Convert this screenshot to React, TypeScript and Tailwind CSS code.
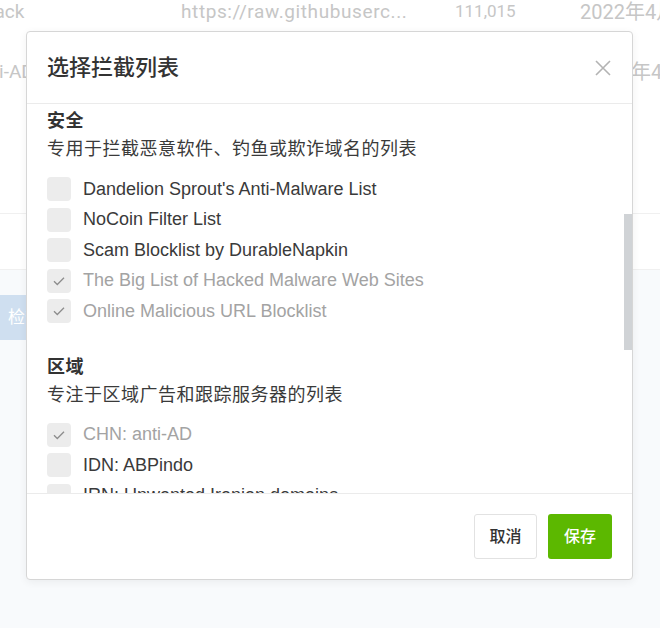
import React from "react";

const security = [
  { name: "Dandelion Sprout's Anti-Malware List", on: false },
  { name: "NoCoin Filter List", on: false },
  { name: "Scam Blocklist by DurableNapkin", on: false },
  { name: "The Big List of Hacked Malware Web Sites", on: true },
  { name: "Online Malicious URL Blocklist", on: true },
];

const regional = [
  { name: "CHN: anti-AD", on: true },
  { name: "IDN: ABPindo", on: false },
  { name: "IRN: Unwanted Iranian domains", on: false },
];

function Row({ name, on }: { name: string; on: boolean }) {
  return (
    <div className="flex h-[30.5px] items-center gap-[12px]">
      <span className="flex h-[24px] w-[24px] shrink-0 items-center justify-center rounded-[4px] bg-[#ececec]">
        {on && (
          <svg width="14" height="14" viewBox="0 0 14 14" fill="none">
            <path d="M2 7.2l3.3 3.3L12 3.8" stroke="#8c8c8c" strokeWidth="1.3" />
          </svg>
        )}
      </span>
      <span className={"whitespace-nowrap text-[18px] " + (on ? "text-[#a3a3a3]" : "text-[#3a3a3a]")}>{name}</span>
    </div>
  );
}

function Section({ title, desc, items }: { title: string; desc: string; items: { name: string; on: boolean }[] }) {
  return (
    <div>
      <div className="text-[18px] leading-[26px] font-bold tracking-[0.5px] text-[#333]">{title}</div>
      <div className="mt-[2px] text-[18px] leading-[26px] tracking-[0.5px] text-[#3a3a3a]">{desc}</div>
      <div className="mt-[12px] flex flex-col">
        {items.map((it) => (
          <Row key={it.name} {...it} />
        ))}
      </div>
    </div>
  );
}

export default function App() {
  return (
    <div className="relative h-[628px] w-[660px] overflow-hidden bg-[#f8fafc] font-['Liberation_Sans','Noto_Sans_CJK_SC',sans-serif]">
      {/* page behind the dialog */}
      <div className="bg-white">
        <div className="-mt-[18px] flex h-[60px] items-center whitespace-nowrap text-[#c6c6c6] font-['Roboto','Noto_Sans_CJK_SC',sans-serif]">
          <span className="-ml-[22px] w-[203px] shrink-0 text-[19px]">Black</span>
          <span className="w-[274px] shrink-0 text-[19px] tracking-[0.6px]">https://raw.githubuserc...</span>
          <span className="w-[125px] shrink-0 text-[17px]">111,015</span>
          <span className="shrink-0 text-[20px]">2022年4月</span>
        </div>
        <div className="flex h-[60px] items-center whitespace-nowrap text-[#c6c6c6] font-['Roboto','Noto_Sans_CJK_SC',sans-serif]">
          <span className="-ml-[30px] w-[616px] shrink-0 text-[19px]">Anti-AD</span>
          <span className="shrink-0 text-[20px]">2022年4月</span>
        </div>
        <div className="h-[111px]" />
        <div className="h-[57px] border-y border-[#f0f0f0]" />
      </div>
      <div className="mt-[25px] flex h-[45px] w-[120px] items-center bg-[#cfdff0] pl-[8px] text-[17px] text-white">
        检查更新
      </div>

      {/* dialog */}
      <div className="absolute left-[26px] top-[31px] flex w-[607px] flex-col rounded-[4px] border border-[#d6d6d6] bg-white shadow-[0_2px_8px_rgba(0,0,0,0.06)]">
        <div className="flex h-[72px] items-center justify-between border-b border-[#ebebeb] pl-[20px] pr-[21px]">
          <span className="text-[22px] font-medium text-[#333]">选择拦截列表</span>
          <svg width="16" height="16" viewBox="0 0 16 16" fill="none">
            <path d="M1 1l14 14M15 1L1 15" stroke="#b3b3b3" strokeWidth="1.6" />
          </svg>
        </div>

        <div className="relative h-[389px] overflow-hidden">
          <div className="flex flex-col gap-[27px] px-[20px] pt-[4px]">
            <Section title="安全" desc="专用于拦截恶意软件、钓鱼或欺诈域名的列表" items={security} />
            <Section title="区域" desc="专注于区域广告和跟踪服务器的列表" items={regional} />
          </div>
          <div className="absolute right-0 top-[110px] h-[136px] w-[8px] bg-[#d0d3d6]" />
        </div>

        <div className="flex justify-end gap-[11px] border-t border-[#ebebeb] px-[20px] py-[20px]">
          <button className="h-[45px] w-[63px] rounded-[3px] border border-[#e2e2e2] bg-white text-[16px] font-medium text-[#333]">
            取消
          </button>
          <button className="h-[45px] w-[64px] rounded-[3px] bg-[#5cb800] text-[16px] font-medium text-white">
            保存
          </button>
        </div>
      </div>
    </div>
  );
}
